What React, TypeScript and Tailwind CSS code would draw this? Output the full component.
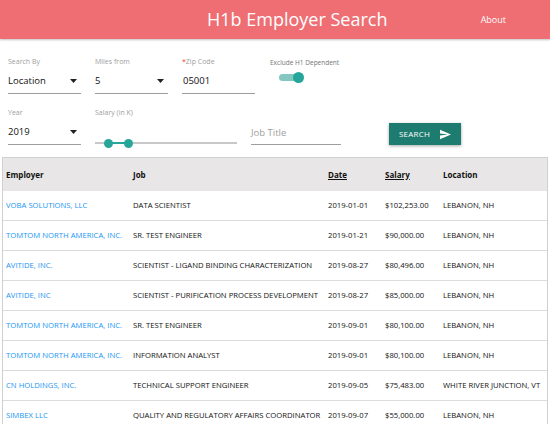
import React from 'react';

const rows = [
  { employer: 'VOBA SOLUTIONS, LLC', job: 'DATA SCIENTIST', date: '2019-01-01', salary: '$102,253.00', location: 'LEBANON, NH' },
  { employer: 'TOMTOM NORTH AMERICA, INC.', job: 'SR. TEST ENGINEER', date: '2019-01-21', salary: '$90,000.00', location: 'LEBANON, NH' },
  { employer: 'AVITIDE, INC.', job: 'SCIENTIST - LIGAND BINDING CHARACTERIZATION', date: '2019-08-27', salary: '$80,496.00', location: 'LEBANON, NH' },
  { employer: 'AVITIDE, INC', job: 'SCIENTIST - PURIFICATION PROCESS DEVELOPMENT', date: '2019-08-27', salary: '$85,000.00', location: 'LEBANON, NH' },
  { employer: 'TOMTOM NORTH AMERICA, INC.', job: 'SR. TEST ENGINEER', date: '2019-09-01', salary: '$80,100.00', location: 'LEBANON, NH' },
  { employer: 'TOMTOM NORTH AMERICA, INC.', job: 'INFORMATION ANALYST', date: '2019-09-01', salary: '$80,100.00', location: 'LEBANON, NH' },
  { employer: 'CN HOLDINGS, INC.', job: 'TECHNICAL SUPPORT ENGINEER', date: '2019-09-05', salary: '$75,483.00', location: 'WHITE RIVER JUNCTION, VT' },
  { employer: 'SIMBEX LLC', job: 'QUALITY AND REGULATORY AFFAIRS COORDINATOR', date: '2019-09-07', salary: '$55,000.00', location: 'LEBANON, NH' },
];

const Caret = () => (
  <svg width="7" height="4" viewBox="0 0 7 4" className="mr-[4px]">
    <path d="M0 0h7L3.5 4z" fill="#222" />
  </svg>
);

const SelectField = ({ label, value }: { label: string; value: string }) => (
  <div className="w-[73px] flex flex-col">
    <span className="text-[7px] text-[#9e9e9e] leading-[8px]">{label}</span>
    <div className="mt-[8px] h-[20px] flex items-center justify-between border-b border-[#9e9e9e]">
      <span className="text-[9.5px] text-[#111] leading-none pb-[6px]">{value}</span>
      <span className="pb-[6px]">
        <Caret />
      </span>
    </div>
  </div>
);

const App = () => {
  return (
    <div className="w-[550px] h-[424px] overflow-hidden bg-white font-['Open_Sans',sans-serif]">
      {/* Header */}
      <div className="h-[39px] bg-[#ee6e73] flex items-center shadow-[0_1px_2px_rgba(0,0,0,0.25)] relative z-10">
        <h1 className="pl-[207px] text-[18px] text-white leading-none pb-[2px]">H1b Employer Search</h1>
        <span className="ml-auto mr-[44px] text-[9px] text-white font-medium">About</span>
      </div>

      {/* Form */}
      <div className="pl-[8px] pt-[19px]">
        <div className="flex gap-[14px] items-start">
          <SelectField label="Search By" value="Location" />
          <SelectField label="Miles from" value="5" />
          <div className="w-[73px] flex flex-col">
            <span className="text-[7px] text-[#9e9e9e] leading-[8px]">
              <span className="text-[#f44336]">*</span>Zip Code
            </span>
            <div className="mt-[8px] h-[20px] flex items-center border-b border-[#9e9e9e]">
              <span className="text-[9.5px] text-[#111] leading-none pb-[6px] pl-[1px]">05001</span>
            </div>
          </div>
          <div className="ml-[1px] flex flex-col">
            <span className="text-[6.5px] text-[#757575] leading-[8px] pt-[1px]">Exclude H1 Dependent</span>
            <div className="mt-[5px] ml-[9px] relative w-[25px] h-[11px] flex items-center">
              <div className="w-[20px] h-[7px] rounded-full bg-[#84c7c1]" />
              <div className="absolute right-0 top-0 w-[11px] h-[11px] rounded-full bg-[#26a69a]" />
            </div>
          </div>
        </div>

        <div className="flex items-start mt-[15px] h-[37px]">
          <SelectField label="Year" value="2019" />
          <div className="ml-[14px] w-[142px] flex flex-col">
            <span className="text-[7px] text-[#9e9e9e] leading-[8px]">Salary (in K)</span>
            <div className="mt-[21px] relative h-[10px] flex items-center">
              <div className="w-full h-[2px] bg-[#c8c8c8]" />
              <div className="absolute left-[13px] w-[20px] h-[2px] bg-[#26a69a]" />
              <div className="absolute left-[9px] w-[9px] h-[9px] rounded-full bg-[#26a69a]" />
              <div className="absolute left-[29px] w-[9px] h-[9px] rounded-full bg-[#26a69a]" />
            </div>
          </div>
          <div className="ml-[14px] w-[90px] mt-[16px] h-[20px] flex items-center border-b border-[#9e9e9e]">
            <span className="text-[9.5px] text-[#9e9e9e] leading-none pb-[4px]">Job Title</span>
          </div>
          <button className="ml-[48px] mt-[14px] w-[72px] h-[22px] bg-[#1e7b70] text-white flex items-center justify-center gap-[10px] shadow-[0_1px_3px_rgba(0,0,0,0.35)]">
            <span className="text-[8px] font-medium tracking-[0.2px]">SEARCH</span>
            <svg width="11" height="11" viewBox="2 3 21 18">
              <path d="M2.01 21L23 12 2.01 3 2 10l15 2-15 2z" fill="white" />
            </svg>
          </button>
        </div>
      </div>

      {/* Table */}
      <div className="mt-[11px] mx-[2px] border-t border-x border-[#d0d0d0] text-[7.7px]">
        <div className="h-[33px] bg-[#e8e6e6] flex items-center font-bold text-[8px] text-[#111]">
          <span className="w-[130px] pl-[3px]">Employer</span>
          <span className="w-[195px]">Job</span>
          <span className="w-[57px] underline">Date</span>
          <span className="w-[58px] underline">Salary</span>
          <span>Location</span>
        </div>
        {rows.map((r, i) => (
          <div key={i} className="h-[30px] flex items-center border-b border-[#dcdcdc] text-[#111]">
            <span className="w-[130px] pl-[3px] text-[#2196f3] whitespace-nowrap">{r.employer}</span>
            <span className="w-[195px] whitespace-nowrap">{r.job}</span>
            <span className="w-[57px]">{r.date}</span>
            <span className="w-[58px]">{r.salary}</span>
            <span className="whitespace-nowrap">{r.location}</span>
          </div>
        ))}
      </div>
    </div>
  );
};

export default App;
